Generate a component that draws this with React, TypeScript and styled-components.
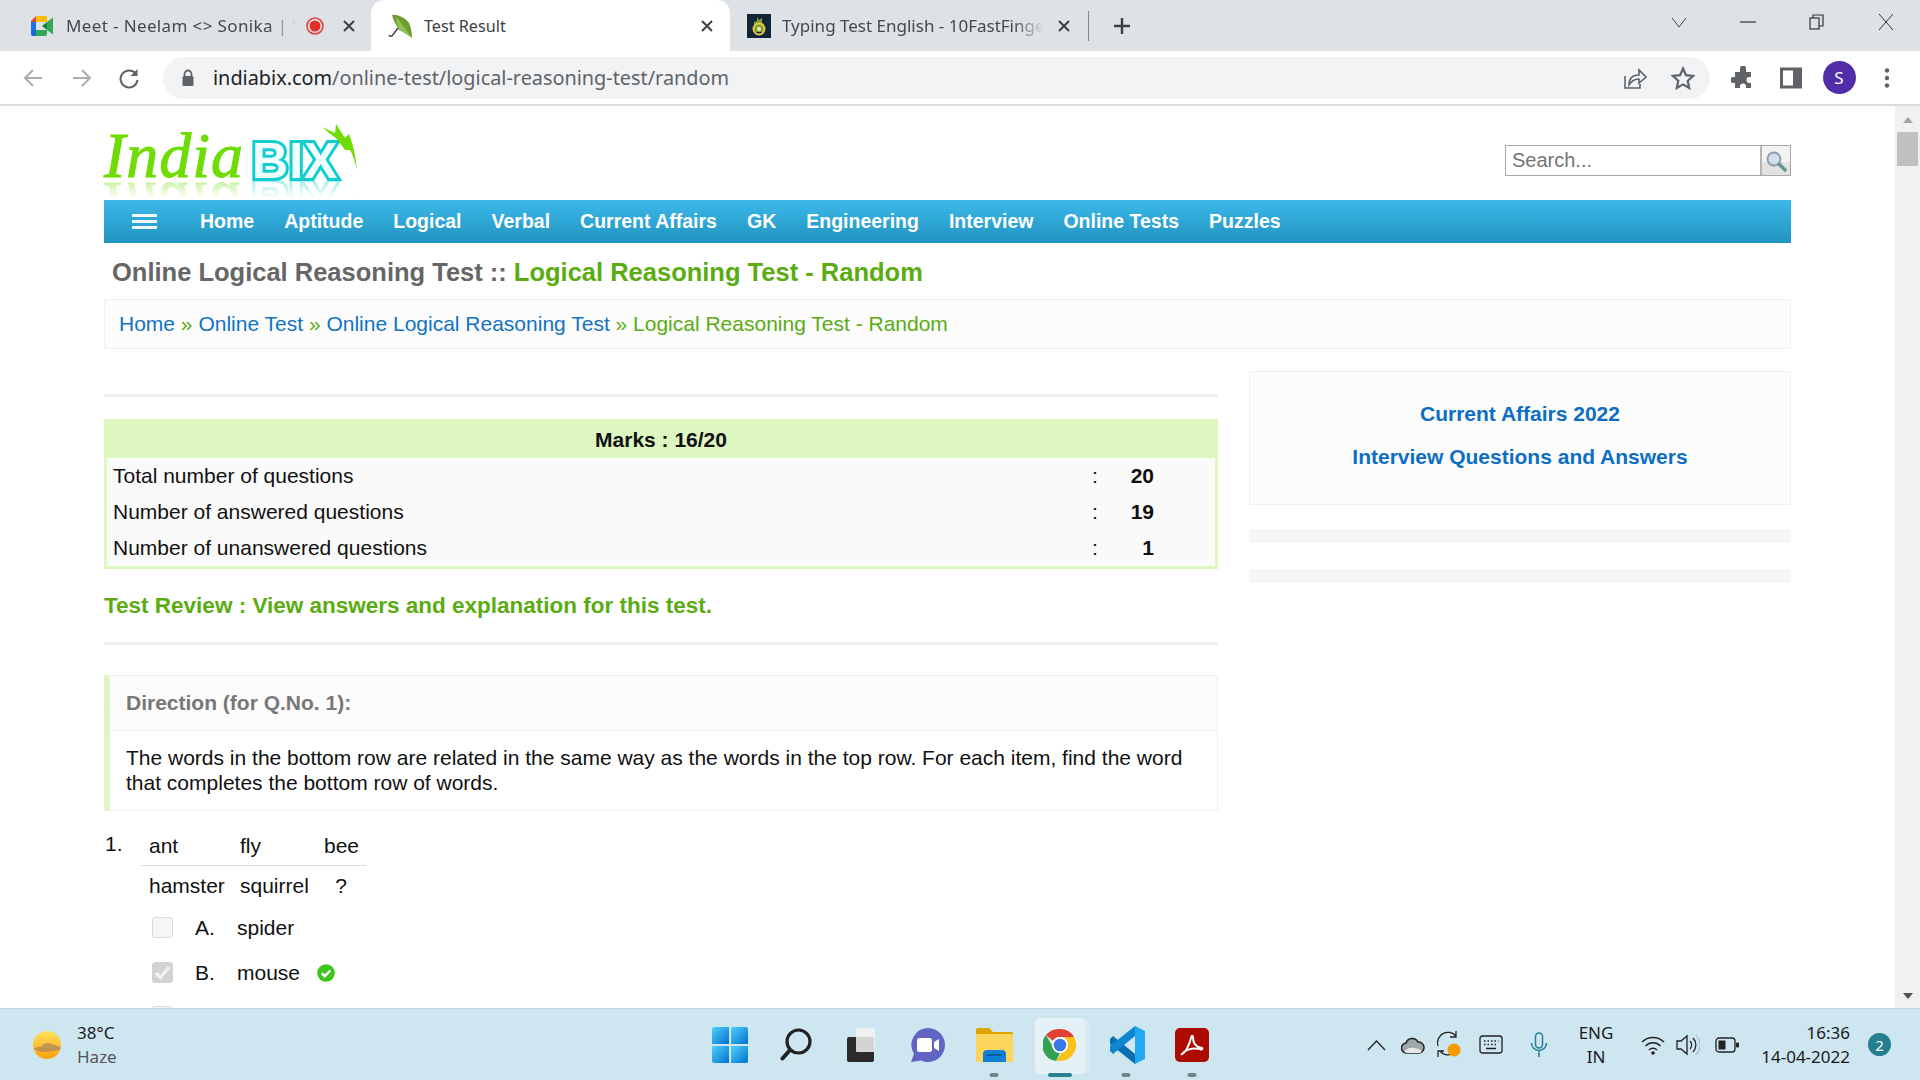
import * as React from "react";
import styled, { createGlobalStyle } from "styled-components";

const GlobalStyle = createGlobalStyle`
  html, body {
    margin: 0;
    padding: 0;
    background: #fff;
    overflow: hidden;
  }
  * { box-sizing: border-box; }
`;

const WEB = `"Liberation Sans", Arial, sans-serif`;
const UI = `"Noto Sans", "Open Sans", sans-serif`;

const Screen = styled.div`
  width: 1920px;
  height: 1080px;
  display: flex;
  flex-direction: column;
  overflow: hidden;
  font-family: ${WEB};
`;

/* ---------- browser chrome ---------- */

const TabStrip = styled.div`
  height: 51px;
  flex: none;
  display: flex;
  align-items: stretch;
  background: #dee1e6;
  color: #45484d;
  font-family: ${UI};
`;

const Tab = styled.div<{ $w: number; $active?: boolean; $pad?: number }>`
  position: relative;
  width: ${(p) => p.$w}px;
  flex: none;
  display: flex;
  align-items: center;
  padding-left: ${(p) => p.$pad ?? 17}px;
  border-radius: 13px 13px 0 0;
  background: ${(p) => (p.$active ? "#fff" : "transparent")};
  color: ${(p) => (p.$active ? "#3c4043" : "#45484d")};
`;

const TabTitle = styled.div<{ $w: number; $track?: number }>`
  width: ${(p) => p.$w}px;
  margin-left: 11px;
  font-size: 17px;
  line-height: 22px;
  letter-spacing: ${(p) => p.$track ?? 0}px;
  white-space: nowrap;
  -webkit-mask-image: linear-gradient(to right, #000 88%, transparent 100%);
  mask-image: linear-gradient(to right, #000 88%, transparent 100%);
`;

const PlainTitle = styled(TabTitle)`
  font-size: 16.2px;
  -webkit-mask-image: none;
  mask-image: none;
`;

const TabClose = styled.div<{ $ml: number }>`
  margin-left: ${(p) => p.$ml}px;
  display: flex;
`;

const TabDivider = styled.div`
  width: 1px;
  height: 30px;
  margin: 11px 0 0 3px;
  background: #85888c;
`;

const NewTab = styled.div`
  margin-left: 24px;
  display: flex;
  align-items: center;
`;

const WindowControls = styled.div`
  margin-left: auto;
  display: flex;
  align-items: flex-start;
  padding-top: 14px;
  padding-right: 26px;
`;

const WindowBtn = styled.div<{ $ml: number }>`
  margin-left: ${(p) => p.$ml}px;
  display: flex;
`;

const Toolbar = styled.div`
  height: 55px;
  flex: none;
  display: flex;
  align-items: center;
  background: #fff;
  border-bottom: 2px solid #dcdcdc;
`;

const ToolSlot = styled.div<{ $w: number }>`
  width: ${(p) => p.$w}px;
  flex: none;
  display: flex;
  align-items: center;
  justify-content: center;
`;

const Omnibox = styled.div`
  width: 1547px;
  height: 42px;
  flex: none;
  display: flex;
  align-items: center;
  margin: 0 9px 0 3px;
  padding-left: 18px;
  border-radius: 21px;
  background: #f1f3f4;
`;

const UrlText = styled.div`
  margin-left: 18px;
  font-family: ${UI};
  font-size: 19.85px;
  color: #5f6368;
  white-space: nowrap;
`;

const UrlHost = styled.span`
  color: #202124;
`;

const OmniActions = styled.div`
  margin-left: auto;
  display: flex;
  align-items: center;
  gap: 24px;
  padding-right: 15px;
`;

const Avatar = styled.div`
  width: 33px;
  height: 33px;
  border-radius: 50%;
  background: #512da8;
  color: #fff;
  display: flex;
  align-items: center;
  justify-content: center;
  font-family: ${UI};
  font-size: 17px;
`;

/* ---------- page ---------- */

const Viewport = styled.div`
  flex: 1;
  min-height: 0;
  display: flex;
`;

const Page = styled.div`
  flex: 1;
  min-width: 0;
  overflow: hidden;
  padding: 0 104px;
  background: #fff;
`;

const Scrollbar = styled.div`
  width: 25px;
  flex: none;
  display: flex;
  flex-direction: column;
  align-items: center;
  background: #f1f1f1;
`;

const ScrollArrow = styled.div<{ $down?: boolean }>`
  margin-top: ${(p) => (p.$down ? "auto" : "11px")};
  margin-bottom: ${(p) => (p.$down ? "9px" : "0")};
  width: 0;
  height: 0;
  border-left: 5px solid transparent;
  border-right: 5px solid transparent;
  ${(p) =>
    p.$down
      ? "border-top: 6px solid #505050;"
      : "border-bottom: 6px solid #a3a3a3;"}
`;

const ScrollThumb = styled.div`
  width: 21px;
  height: 34px;
  margin-top: 9px;
  background: #c1c1c1;
`;

const SiteHeader = styled.div`
  height: 94px;
  display: flex;
  align-items: flex-start;
  justify-content: space-between;
`;

const Logo = styled.div`
  position: relative;
  width: 256px;
  height: 58px;
  margin-top: 16px;
  display: flex;
  align-items: flex-start;
  padding-top: 2px;
  -webkit-box-reflect: below 0 linear-gradient(transparent 68%, rgba(255, 255, 255, 0.4));
`;

const LogoIndia = styled.span`
  font-family: "Liberation Serif", serif;
  font-style: italic;
  font-size: 64px;
  line-height: 64px;
  letter-spacing: 1px;
  color: #6fdc02;
  -webkit-text-stroke: 1px #6fdc02;
`;

const LogoBix = styled.span`
  margin-left: 8px;
  margin-top: 12px;
  font-family: "Liberation Sans", sans-serif;
  font-weight: 700;
  font-size: 50px;
  line-height: 50px;
  letter-spacing: 1px;
  color: #f0fefe;
  -webkit-text-stroke: 6px #12cdd0;
  paint-order: stroke fill;
`;

const LogoBolt = styled.svg`
  position: absolute;
  left: 218px;
  top: 0;
`;

const SearchBox = styled.div`
  margin-top: 39px;
  width: 286px;
  height: 31px;
  display: flex;
  border: 1.5px solid #a9a9a9;
`;

const SearchInput = styled.div`
  flex: 1;
  display: flex;
  align-items: center;
  padding-left: 6px;
  font-size: 20px;
  color: #757575;
  background: #fff;
`;

const SearchButton = styled.div`
  width: 30px;
  flex: none;
  display: flex;
  align-items: center;
  justify-content: center;
  border-left: 2px solid #b5b5b5;
  background: linear-gradient(#f3f3f3 55%, #e2e2e2 55%);
`;

const NavBar = styled.div`
  height: 43px;
  display: flex;
  align-items: center;
  padding-left: 28px;
  gap: 30px;
  background: linear-gradient(#3cb9ea, #2193bf);
`;

const Hamburger = styled.div`
  width: 25px;
  height: 15px;
  margin-right: 13px;
  display: flex;
  flex-direction: column;
  justify-content: space-between;
`;

const HamburgerBar = styled.span`
  height: 3px;
  background: #fff;
  opacity: 0.92;
`;

const NavLink = styled.a`
  font-size: 19.5px;
  font-weight: 700;
  color: #fff;
`;

const PageTitle = styled.h1`
  margin: 0;
  height: 56px;
  padding: 2px 0 0 8px;
  display: flex;
  align-items: center;
  gap: 7px;
  font-size: 25.5px;
  font-weight: 700;
  color: #666;
`;

const TitleGreen = styled.span`
  color: #5aac12;
`;

const Crumbs = styled.div`
  height: 50px;
  padding-left: 14px;
  display: flex;
  align-items: center;
  border: 1px solid #f0f0f0;
  background: #fcfcfc;
  font-size: 21px;
  color: #5aac12;
  white-space: pre;
`;

const CrumbLink = styled.a`
  color: #1273c4;
`;

const Columns = styled.div`
  display: flex;
  gap: 31px;
  margin-top: 22px;
`;

const MainCol = styled.div`
  width: 1114px;
  flex: none;
`;

const SideCol = styled.div`
  flex: 1;
  min-width: 0;
`;

const Rule = styled.div<{ $top: number }>`
  height: 3px;
  margin-top: ${(p) => p.$top}px;
  background: #eee;
`;

const MarksBox = styled.div`
  margin-top: 22px;
  border: 3px solid #def7c1;
  border-top: 0;
  background: #fafafa;
`;

const MarksHead = styled.div`
  height: 39px;
  margin: 0 -3px;
  padding-top: 2px;
  display: flex;
  align-items: center;
  justify-content: center;
  background: #def7c1;
  font-size: 21px;
  font-weight: 700;
  color: #111;
`;

const MarksRow = styled.div`
  height: 36px;
  display: flex;
  align-items: center;
  padding-left: 6px;
  font-size: 21px;
  color: #111;
`;

const MarksLabel = styled.div`
  flex: 1;
`;

const MarksColon = styled.div`
  width: 30px;
`;

const MarksValue = styled.div`
  width: 32px;
  margin-right: 61px;
  text-align: right;
  font-weight: 700;
`;

const ReviewLine = styled.div`
  margin-top: 20px;
  height: 32px;
  padding-top: 2px;
  display: flex;
  align-items: center;
  font-size: 22.5px;
  font-weight: 700;
  color: #5aac12;
`;

const Direction = styled.div`
  margin-top: 30px;
  border: 1px solid #f0f0f0;
  border-left: 6px solid #def7c1;
`;

const DirectionHead = styled.div`
  height: 55px;
  padding-left: 16px;
  display: flex;
  align-items: center;
  border-bottom: 1px solid #f0f0f0;
  background: #fcfcfc;
  font-size: 21px;
  font-weight: 700;
  color: #777;
`;

const DirectionBody = styled.div`
  height: 79px;
  padding: 14px 15px 0 16px;
  font-size: 21px;
  line-height: 25px;
  color: #111;
`;

const Question = styled.div`
  margin-top: 14px;
  display: flex;
  font-size: 21px;
  color: #111;
`;

const QNumber = styled.div`
  width: 37px;
  flex: none;
  padding: 7px 0 0 1px;
`;

const QBody = styled.div`
  flex: 1;
`;

const WordGrid = styled.div`
  width: 225px;
  display: grid;
  grid-template-columns: 91px 84px 50px;
  grid-template-rows: 41px 40px;
`;

const WordCell = styled.div<{ $under?: boolean; $center?: boolean }>`
  display: flex;
  align-items: center;
  justify-content: ${(p) => (p.$center ? "center" : "flex-start")};
  padding-left: ${(p) => (p.$center ? "0" : "8px")};
  ${(p) => (p.$under ? "border-bottom: 1px solid #ddd; padding-top: 1px;" : "")}
`;

const OptionRow = styled.div<{ $top: number }>`
  height: 21px;
  margin-top: ${(p) => p.$top}px;
  padding-left: 11px;
  display: flex;
  align-items: center;
`;

const Check = styled.div<{ $on?: boolean }>`
  width: 21px;
  height: 21px;
  flex: none;
  display: flex;
  align-items: center;
  justify-content: center;
  border-radius: 3px;
  border: 1px solid ${(p) => (p.$on ? "#d3d3d3" : "#dcdcdc")};
  background: ${(p) => (p.$on ? "#d3d3d3" : "#f6f6f6")};
`;

const OptionKey = styled.div`
  width: 42px;
  margin-left: 22px;
`;

const OptionText = styled.div`
  margin-right: 16px;
`;

const SideCard = styled.div`
  height: 134px;
  padding-bottom: 7px;
  display: flex;
  flex-direction: column;
  align-items: center;
  justify-content: center;
  gap: 18px;
  border: 1px solid #eee;
  background: #fcfcfc;
`;

const SideLink = styled.a`
  font-size: 21px;
  line-height: 25px;
  font-weight: 700;
  color: #0d6ec4;
`;

const SideStub = styled.div<{ $top: number }>`
  height: 14px;
  margin-top: ${(p) => p.$top}px;
  background: #f6f6f6;
`;

/* ---------- taskbar ---------- */

const Taskbar = styled.div`
  height: 72px;
  flex: none;
  display: flex;
  align-items: center;
  border-top: 1px solid #bcd5de;
  background: #cde6f0;
  font-family: ${UI};
  color: #1b1b1b;
`;

const Weather = styled.div`
  width: 697px;
  flex: none;
  display: flex;
  align-items: center;
  padding-left: 31px;
  gap: 14px;
`;

const WeatherText = styled.div`
  font-size: 17px;
  line-height: 24px;
`;

const WeatherSub = styled.div`
  color: #555;
`;

const AppIcons = styled.div`
  display: flex;
  height: 100%;
`;

const AppSlot = styled.div`
  position: relative;
  width: 66px;
  display: flex;
  align-items: center;
  justify-content: center;
`;

const ActivePlate = styled.div`
  position: absolute;
  left: 8px;
  top: 9px;
  width: 50px;
  height: 56px;
  border-radius: 5px;
  background: #e4f1f7;
  box-shadow: 5px 0 0 -1px #d9ecf4;
`;

const AppGlyph = styled.div`
  position: relative;
  display: flex;
`;

const RunDot = styled.div<{ $wide?: boolean }>`
  position: absolute;
  bottom: 3px;
  left: 50%;
  transform: translateX(-50%);
  width: ${(p) => (p.$wide ? 24 : 9)}px;
  height: 4px;
  border-radius: 2px;
  background: ${(p) => (p.$wide ? "#2b7f91" : "#71858d")};
`;

const Tray = styled.div`
  margin-left: auto;
  display: flex;
  align-items: center;
  padding-right: 29px;
`;

const TraySlot = styled.div<{ $ml: number }>`
  margin-left: ${(p) => p.$ml}px;
  display: flex;
`;

const TrayText = styled.div<{ $w: number; $ml: number; $right?: boolean }>`
  width: ${(p) => p.$w}px;
  margin-left: ${(p) => p.$ml}px;
  font-size: 17px;
  line-height: 24px;
  text-align: ${(p) => (p.$right ? "right" : "center")};
  white-space: nowrap;
`;

const Badge = styled.div`
  width: 23px;
  height: 23px;
  margin-left: 18px;
  border-radius: 50%;
  background: #24808f;
  color: #fff;
  font-size: 15px;
  display: flex;
  align-items: center;
  justify-content: center;
`;

/* ---------- icons ---------- */

const MeetIcon = () => (
  <svg width="24" height="20" viewBox="0 0 24 20">
    <path d="M5 0h11v6H5z" fill="#fbbc04" />
    <path d="M0 5 5 0v6H0z" fill="#ea4335" />
    <path d="M0 6h5v8H0z" fill="#1a73e8" />
    <path d="M0 14h5v6H2a2 2 0 0 1-2-2z" fill="#1967d2" />
    <path d="M5 14h11v4a2 2 0 0 1-2 2H5z" fill="#34a853" />
    <path d="M16 6v8l-5-4z" fill="#188038" />
    <path d="m16 6 6-4.500v17L16 14z" fill="#34a853" />
    <path d="M16 0v6h-5z" fill="#fbbc04" />
  </svg>
);

const RecordDot = () => (
  <svg width="18" height="18" viewBox="0 0 18 18" style={{ marginLeft: 10 }}>
    <circle cx="9" cy="9" r="8" fill="none" stroke="#e0403a" strokeWidth="1.6" />
    <circle cx="9" cy="9" r="5.500" fill="#e0302a" />
  </svg>
);

const UmbrellaIcon = () => (
  <svg width="26" height="26" viewBox="0 0 26 26">
    <path d="M5 2 C11 1 18 5 22 10 C24 14 25 20 25 25 C21 21 16 18 12 17 C9 12 6 7 5 2Z" fill="#6c9e2e" />
    <path d="M9 4 C13 8 18 15 25 25 C18 20 14 18 12 17 C10 12 9 8 9 4Z" fill="#8fbe52" />
    <path d="M11 15 5 23a2 2 0 0 1-3-1" fill="none" stroke="#444" strokeWidth="1.5" />
  </svg>
);

const FingersIcon = () => (
  <svg width="24" height="24" viewBox="0 0 24 24">
    <rect width="24" height="24" fill="#12263a" />
    <path d="M7 18V8l3-1V3l2 3 3-2v5l2 1v8z" fill="#7f9e3a" />
    <circle cx="12" cy="15" r="5.500" fill="none" stroke="#e8c63a" strokeWidth="2" />
    <circle cx="12" cy="15" r="2" fill="#f0e8b0" />
  </svg>
);

const CloseX = () => (
  <svg width="14" height="14" viewBox="0 0 14 14">
    <path d="M2 2l10 10M12 2 2 12" stroke="#3c4043" strokeWidth="2" fill="none" />
  </svg>
);

const PlusIcon = () => (
  <svg width="18" height="18" viewBox="0 0 18 18">
    <path d="M9 1v16M1 9h16" stroke="#3c4043" strokeWidth="2.400" fill="none" />
  </svg>
);

const Chevron = () => (
  <svg width="16" height="16" viewBox="0 0 16 16">
    <path d="M1 4l7 9 7-9" stroke="#444" strokeWidth="1" fill="none" />
  </svg>
);

const MinIcon = () => (
  <svg width="16" height="16" viewBox="0 0 16 16">
    <path d="M0 8h16" stroke="#333" strokeWidth="1.200" />
  </svg>
);

const RestoreIcon = () => (
  <svg width="16" height="16" viewBox="0 0 16 16">
    <rect x="1" y="4" width="9" height="11" fill="none" stroke="#333" strokeWidth="1.200" />
    <path d="M4 4V1h10v11h-4" fill="none" stroke="#333" strokeWidth="1.200" />
  </svg>
);

const WinClose = () => (
  <svg width="16" height="16" viewBox="0 0 16 16">
    <path d="M1 0l14 16M15 0 1 16" stroke="#333" strokeWidth="1" fill="none" />
  </svg>
);

const BackIcon = ({ flip }: { flip?: boolean }) => (
  <svg width="22" height="22" viewBox="0 0 22 22" style={flip ? { transform: "scaleX(-1)" } : undefined}>
    <path d="M20 11H3M11 3l-8 8 8 8" stroke="#a9acb0" strokeWidth="2" fill="none" />
  </svg>
);

const ReloadIcon = () => (
  <svg width="22" height="22" viewBox="0 0 22 22">
    <path d="M18 7a8.500 8.500 0 1 0 1.500 6" stroke="#5f6368" strokeWidth="2" fill="none" />
    <path d="M19.500 2v7h-7z" fill="#5f6368" />
  </svg>
);

const LockIcon = () => (
  <svg width="14" height="18" viewBox="0 0 14 18">
    <path d="M3.500 8V5a3.500 3.500 0 0 1 7 0v3" fill="none" stroke="#5f6368" strokeWidth="1.800" />
    <rect x="1.500" y="7" width="11" height="10" rx="1.500" fill="#5f6368" />
  </svg>
);

const ShareIcon = () => (
  <svg width="24" height="24" viewBox="0 0 24 24">
    <path d="M2 10v12h15v-4" fill="none" stroke="#5f6368" strokeWidth="1.600" />
    <path d="M6 19c0-7 4-10 10-10V4l7 7-7 6v-4c-4 0-7 1-10 6z" fill="none" stroke="#5f6368" strokeWidth="1.600" />
  </svg>
);

const StarIcon = () => (
  <svg width="24" height="24" viewBox="0 0 24 24">
    <path d="m12 2.500 3 6.700 7 .8-5.300 4.800 1.500 7.200L12 18.400 5.800 22l1.500-7.200L2 10l7-.8z" fill="none" stroke="#5f6368" strokeWidth="2.200" />
  </svg>
);

const PuzzleIcon = () => (
  <svg width="24" height="24" viewBox="0 0 24 24">
    <path d="M9 2.500a3 3 0 0 1 6 0V6h5v5h-1.500a3 3 0 0 0 0 6H20v5h-5v-1.500a3 3 0 0 0-6 0V22H4v-5H2.500a3 3 0 0 1 0-6H4V6h5z" fill="#5f6368" />
  </svg>
);

const SidebarIcon = () => (
  <svg width="22" height="22" viewBox="0 0 22 22">
    <rect x="1.500" y="2" width="19" height="18" fill="none" stroke="#5f6368" strokeWidth="3" />
    <rect x="13" y="2" width="7" height="18" fill="#5f6368" />
  </svg>
);

const DotsIcon = () => (
  <svg width="8" height="22" viewBox="0 0 8 22">
    <circle cx="4" cy="3.500" r="2.200" fill="#5f6368" />
    <circle cx="4" cy="11" r="2.200" fill="#5f6368" />
    <circle cx="4" cy="18.500" r="2.200" fill="#5f6368" />
  </svg>
);

const BoltIcon = () => (
  <LogoBolt width="36" height="50" viewBox="0 0 36 50">
    <path d="M0 5 13 11 14 2 23 16 27 12C31 22 34 36 35 48C33 40 31 33 28 28L23 28L15 17L7 11Z" fill="#6fdc02" />
  </LogoBolt>
);

const MagnifierIcon = () => (
  <svg width="22" height="22" viewBox="0 0 22 22">
    <circle cx="9" cy="9" r="6.500" fill="#d3deee" stroke="#8d9aa6" strokeWidth="1.800" />
    <path d="m14 14 6 6" stroke="#6c9298" strokeWidth="3.500" strokeLinecap="round" />
  </svg>
);

const TickMark = () => (
  <svg width="17" height="15" viewBox="0 0 17 15">
    <path d="M2 8l4.500 4.500L15 2" fill="none" stroke="#f2f2f2" strokeWidth="3.500" />
  </svg>
);

const GreenTick = () => (
  <svg width="20" height="20" viewBox="0 0 20 20">
    <circle cx="10" cy="10" r="8.800" fill="#3cc51c" />
    <path d="M5.800 10.200l3 3 5.500-5.700" fill="none" stroke="#fff" strokeWidth="2.400" />
  </svg>
);

const SunIcon = () => (
  <svg width="32" height="32" viewBox="0 0 32 32">
    <defs>
      <linearGradient id="sun" x1="0" y1="0" x2="0" y2="1">
        <stop offset="0" stopColor="#ffe05c" />
        <stop offset="1" stopColor="#ff9f0a" />
      </linearGradient>
    </defs>
    <circle cx="16" cy="16" r="14" fill="url(#sun)" />
    <path d="M3 20c2-2 5-2 7-2 1-4 9-5 12-2 3 0 6 1 8 3-2 3-5 3-9 3-6 2-14 1-18-2z" fill="#a9885c" opacity="0.75" />
  </svg>
);

const StartIcon = () => (
  <svg width="36" height="36" viewBox="0 0 36 36">
    <defs>
      <linearGradient id="win" x1="0" y1="0" x2="1" y2="1">
        <stop offset="0" stopColor="#52d1fb" />
        <stop offset="1" stopColor="#0070cf" />
      </linearGradient>
    </defs>
    <path d="M2 0h15v17H0V2a2 2 0 0 1 2-2z" fill="url(#win)" />
    <path d="M19 0h15a2 2 0 0 1 2 2v15H19z" fill="url(#win)" />
    <path d="M0 19h17v17H2a2 2 0 0 1-2-2z" fill="url(#win)" />
    <path d="M19 19h17v15a2 2 0 0 1-2 2H19z" fill="url(#win)" />
  </svg>
);

const TaskSearchIcon = () => (
  <svg width="32" height="34" viewBox="0 0 32 34">
    <circle cx="18.500" cy="13.500" r="11.500" fill="none" stroke="#222" strokeWidth="3.200" />
    <path d="m10 22-7.500 8.500" stroke="#222" strokeWidth="4" strokeLinecap="round" />
  </svg>
);

const TaskViewIcon = () => (
  <svg width="28" height="34" viewBox="0 0 28 34" style={{ marginLeft: -3 }}>
    <rect x="0" y="9" width="27" height="25" rx="2" fill="#2b2b2b" />
    <rect x="9" y="0" width="19" height="24" rx="1" fill="#f2f2f2" opacity="0.85" />
  </svg>
);

const ChatIcon = () => (
  <svg width="36" height="36" viewBox="0 0 36 36">
    <path d="M18 1a17 17 0 1 1-7 32.500L1 35l3-8A17 17 0 0 1 18 1z" fill="#6264c4" />
    <rect x="7" y="11" width="15" height="14" rx="2.500" fill="#fff" />
    <path d="m24 15 5-3v12l-5-3z" fill="#fff" />
  </svg>
);

const FolderIcon = () => (
  <svg width="37" height="34" viewBox="0 0 37 34">
    <path d="M0 2a2 2 0 0 1 2-2h11l4 4h18a2 2 0 0 1 2 2v2H0z" fill="#e0a400" />
    <path d="M0 6h35a2 2 0 0 1 2 2v26H0z" fill="#fdd45c" />
    <path d="M7 34V26a4 4 0 0 1 4-4h15a4 4 0 0 1 4 4v8z" fill="#0f7fd6" />
    <path d="M11 27h15" stroke="#0a5ba0" strokeWidth="2" />
  </svg>
);

const ChromeIcon = () => (
  <svg width="34" height="34" viewBox="0 0 34 34">
    <path d="M17 1a16 16 0 0 1 14 8H17a8 8 0 0 0-7 4L3 7a16 16 0 0 1 14-6z" fill="#e34133" />
    <path d="M3 7l7 12a8 8 0 0 0 7 6l-4 8A16 16 0 0 1 3 7z" fill="#30a24f" />
    <path d="M31 9a16 16 0 0 1-14 24h-4l7-10a8 8 0 0 0 0-14z" fill="#f9c21b" />
    <circle cx="17" cy="17" r="8" fill="#fff" />
    <circle cx="17" cy="17" r="6.300" fill="#3b78e7" />
  </svg>
);

const VsCodeIcon = () => (
  <svg width="37" height="38" viewBox="0 0 37 38">
    <path d="M2 13 5 10l22 18v10L2 18z" fill="#0a6fb0" />
    <path d="M2 25 5 28l22-18V0L2 20z" fill="#0f87d0" />
    <path d="M27 0l10 5v28l-10 5z" fill="#24a8ef" />
  </svg>
);

const AcrobatIcon = () => (
  <svg width="34" height="34" viewBox="0 0 34 34">
    <rect width="34" height="34" rx="5" fill="#ad0b00" />
    <path d="M7 26c3-1 7-8 9-16 .5-3 2-3 2 0 0 5 3 9 9 10 1 1 0 2-2 1-6-1-12 0-16 3-2 2-3 3-2 2z" fill="none" stroke="#fff" strokeWidth="2" />
  </svg>
);

const TrayChevron = () => (
  <svg width="19" height="12" viewBox="0 0 19 12">
    <path d="M1 11l8.500-9L18 11" fill="none" stroke="#222" strokeWidth="1.300" />
  </svg>
);

const CloudIcon = () => (
  <svg width="24" height="18" viewBox="0 0 24 18">
    <path d="M6 17a5 5 0 0 1-1-10 6.500 6.500 0 0 1 12-1 5.500 5.500 0 0 1 1 11z" fill="#9ea6aa" stroke="#222" strokeWidth="1.500" />
    <path d="M3 16c3-5 11-6 18-1l-2 2H6z" fill="#e8e8e8" />
  </svg>
);

const SyncIcon = () => (
  <svg width="26" height="28" viewBox="0 0 26 28">
    <path d="M2 15A10.500 10.500 0 0 1 20 5M20 0v6h-6" fill="none" stroke="#222" strokeWidth="1.300" />
    <path d="M16 23A10 10 0 0 1 4 20M2 26v-6h6" fill="none" stroke="#222" strokeWidth="1.300" />
    <circle cx="18" cy="19" r="6.500" fill="#f89a00" />
  </svg>
);

const KeyboardIcon = () => (
  <svg width="24" height="19" viewBox="0 0 24 19">
    <rect x="1" y="1" width="22" height="17" rx="2.500" fill="none" stroke="#222" strokeWidth="1.300" />
    <path d="M5 6h1.500M8.500 6H10M12 6h1.500M15.500 6H17M19 6h.5M5 9.500h1.500M8.500 9.500H10M12 9.500h1.500M15.500 9.500H17M7 13.500h10" stroke="#222" strokeWidth="1.500" />
  </svg>
);

const MicIcon = () => (
  <svg width="18" height="26" viewBox="0 0 18 26">
    <rect x="5.500" y="1" width="7" height="15" rx="3.500" fill="none" stroke="#227f95" strokeWidth="1.500" />
    <path d="M1.500 11a7.500 7.500 0 0 0 15 0M9 19v6" fill="none" stroke="#227f95" strokeWidth="1.500" />
  </svg>
);

const WifiIcon = () => (
  <svg width="24" height="20" viewBox="0 0 24 20">
    <path d="M1 7a15.500 15.500 0 0 1 22 0M4.500 11a10.500 10.500 0 0 1 15 0M8 15a5.500 5.500 0 0 1 8 0" fill="none" stroke="#222" strokeWidth="1.500" />
    <circle cx="12" cy="18" r="1.800" fill="#222" />
  </svg>
);

const VolumeIcon = () => (
  <svg width="24" height="22" viewBox="0 0 24 22">
    <path d="M1 7h4l6-5v18l-6-5H1z" fill="none" stroke="#222" strokeWidth="1.300" />
    <path d="M14 7a6 6 0 0 1 0 8M17 4a10 10 0 0 1 0 14" fill="none" stroke="#222" strokeWidth="1.300" />
    <path d="M20 1a14 14 0 0 1 0 20" fill="none" stroke="#aab" strokeWidth="1" />
  </svg>
);

const BatteryIcon = () => (
  <svg width="24" height="16" viewBox="0 0 24 16">
    <rect x="1" y="1" width="19" height="14" rx="3" fill="none" stroke="#222" strokeWidth="1.300" />
    <rect x="3.500" y="3.500" width="7" height="9" fill="#222" />
    <rect x="21" y="5.500" width="3" height="5" rx="1" fill="#222" />
  </svg>
);

const navItems = [
  "Home",
  "Aptitude",
  "Logical",
  "Verbal",
  "Current Affairs",
  "GK",
  "Engineering",
  "Interview",
  "Online Tests",
  "Puzzles",
];

const marks = [
  ["Total number of questions", "20"],
  ["Number of answered questions", "19"],
  ["Number of unanswered questions", "1"],
];

const App: React.FC = () => {
  return (
    <Screen>
      <GlobalStyle />

      <TabStrip>
        <Tab $w={371} $pad={31}>
          <MeetIcon />
          <TabTitle $w={230} $track={0.37}>Meet - Neelam &lt;&gt; Sonika | V</TabTitle>
          <RecordDot />
          <TabClose $ml={18}><CloseX /></TabClose>
        </Tab>
        <Tab $w={359} $active $pad={16}>
          <UmbrellaIcon />
          <PlainTitle $w={276}>Test Result</PlainTitle>
          <TabClose $ml={0}><CloseX /></TabClose>
        </Tab>
        <Tab $w={355}>
          <FingersIcon />
          <TabTitle $w={262}>Typing Test English - 10FastFinge</TabTitle>
          <TabClose $ml={13}><CloseX /></TabClose>
        </Tab>
        <TabDivider />
        <NewTab><PlusIcon /></NewTab>
        <WindowControls>
          <WindowBtn $ml={0}><Chevron /></WindowBtn>
          <WindowBtn $ml={53}><MinIcon /></WindowBtn>
          <WindowBtn $ml={53}><RestoreIcon /></WindowBtn>
          <WindowBtn $ml={53}><WinClose /></WindowBtn>
        </WindowControls>
      </TabStrip>

      <Toolbar>
        <ToolSlot $w={65}><BackIcon /></ToolSlot>
        <ToolSlot $w={33}><BackIcon flip /></ToolSlot>
        <ToolSlot $w={62}><ReloadIcon /></ToolSlot>
        <Omnibox>
          <LockIcon />
          <UrlText>
            <UrlHost>indiabix.com</UrlHost>/online-test/logical-reasoning-test/random
          </UrlText>
          <OmniActions>
            <ShareIcon />
            <StarIcon />
          </OmniActions>
        </Omnibox>
        <ToolSlot $w={48}><PuzzleIcon /></ToolSlot>
        <ToolSlot $w={48}><SidebarIcon /></ToolSlot>
        <ToolSlot $w={48}><Avatar>S</Avatar></ToolSlot>
        <ToolSlot $w={48}><DotsIcon /></ToolSlot>
      </Toolbar>

      <Viewport>
        <Page>
          <SiteHeader>
            <Logo>
              <LogoIndia>India</LogoIndia>
              <LogoBix>BIX</LogoBix>
              <BoltIcon />
            </Logo>
            <SearchBox>
              <SearchInput>Search...</SearchInput>
              <SearchButton><MagnifierIcon /></SearchButton>
            </SearchBox>
          </SiteHeader>

          <NavBar>
            <Hamburger>
              <HamburgerBar />
              <HamburgerBar />
              <HamburgerBar />
            </Hamburger>
            {navItems.map((item) => (
              <NavLink key={item}>{item}</NavLink>
            ))}
          </NavBar>

          <PageTitle>
            Online Logical Reasoning Test ::
            <TitleGreen>Logical Reasoning Test - Random</TitleGreen>
          </PageTitle>

          <Crumbs>
            <CrumbLink>Home</CrumbLink> » <CrumbLink>Online Test</CrumbLink> »{" "}
            <CrumbLink>Online Logical Reasoning Test</CrumbLink> » Logical Reasoning Test - Random
          </Crumbs>

          <Columns>
            <MainCol>
              <Rule $top={23} />
              <MarksBox>
                <MarksHead>Marks : 16/20</MarksHead>
                {marks.map(([label, value]) => (
                  <MarksRow key={label}>
                    <MarksLabel>{label}</MarksLabel>
                    <MarksColon>:</MarksColon>
                    <MarksValue>{value}</MarksValue>
                  </MarksRow>
                ))}
              </MarksBox>
              <ReviewLine>Test Review : View answers and explanation for this test.</ReviewLine>
              <Rule $top={21} />
              <Direction>
                <DirectionHead>Direction (for Q.No. 1):</DirectionHead>
                <DirectionBody>
                  The words in the bottom row are related in the same way as the words in the top row. For each item, find the word that completes the bottom row of words.
                </DirectionBody>
              </Direction>
              <Question>
                <QNumber>1.</QNumber>
                <QBody>
                  <WordGrid>
                    <WordCell $under>ant</WordCell>
                    <WordCell $under>fly</WordCell>
                    <WordCell $under>bee</WordCell>
                    <WordCell>hamster</WordCell>
                    <WordCell>squirrel</WordCell>
                    <WordCell $center>?</WordCell>
                  </WordGrid>
                  <OptionRow $top={11}>
                    <Check />
                    <OptionKey>A.</OptionKey>
                    <OptionText>spider</OptionText>
                  </OptionRow>
                  <OptionRow $top={24}>
                    <Check $on><TickMark /></Check>
                    <OptionKey>B.</OptionKey>
                    <OptionText>mouse</OptionText>
                    <GreenTick />
                  </OptionRow>
                  <OptionRow $top={23}>
                    <Check />
                  </OptionRow>
                </QBody>
              </Question>
            </MainCol>

            <SideCol>
              <SideCard>
                <SideLink>Current Affairs 2022</SideLink>
                <SideLink>Interview Questions and Answers</SideLink>
              </SideCard>
              <SideStub $top={24} />
              <SideStub $top={26} />
            </SideCol>
          </Columns>
        </Page>
        <Scrollbar>
          <ScrollArrow />
          <ScrollThumb />
          <ScrollArrow $down />
        </Scrollbar>
      </Viewport>

      <Taskbar>
        <Weather>
          <SunIcon />
          <WeatherText>
            <div>38°C</div>
            <WeatherSub>Haze</WeatherSub>
          </WeatherText>
        </Weather>
        <AppIcons>
          <AppSlot><AppGlyph><StartIcon /></AppGlyph></AppSlot>
          <AppSlot><AppGlyph><TaskSearchIcon /></AppGlyph></AppSlot>
          <AppSlot><AppGlyph><TaskViewIcon /></AppGlyph></AppSlot>
          <AppSlot><AppGlyph><ChatIcon /></AppGlyph></AppSlot>
          <AppSlot><AppGlyph><FolderIcon /></AppGlyph><RunDot /></AppSlot>
          <AppSlot>
            <ActivePlate />
            <AppGlyph><ChromeIcon /></AppGlyph>
            <RunDot $wide />
          </AppSlot>
          <AppSlot><AppGlyph><VsCodeIcon /></AppGlyph><RunDot /></AppSlot>
          <AppSlot><AppGlyph><AcrobatIcon /></AppGlyph><RunDot /></AppSlot>
        </AppIcons>
        <Tray>
          <TraySlot $ml={0}><TrayChevron /></TraySlot>
          <TraySlot $ml={15}><CloudIcon /></TraySlot>
          <TraySlot $ml={11}><SyncIcon /></TraySlot>
          <TraySlot $ml={17}><KeyboardIcon /></TraySlot>
          <TraySlot $ml={27}><MicIcon /></TraySlot>
          <TrayText $w={44} $ml={26}>ENG<br />IN</TrayText>
          <TraySlot $ml={23}><WifiIcon /></TraySlot>
          <TraySlot $ml={11}><VolumeIcon /></TraySlot>
          <TraySlot $ml={15}><BatteryIcon /></TraySlot>
          <TrayText $w={90} $ml={21} $right>16:36<br />14-04-2022</TrayText>
          <Badge>2</Badge>
        </Tray>
      </Taskbar>
    </Screen>
  );
};

export default App;
